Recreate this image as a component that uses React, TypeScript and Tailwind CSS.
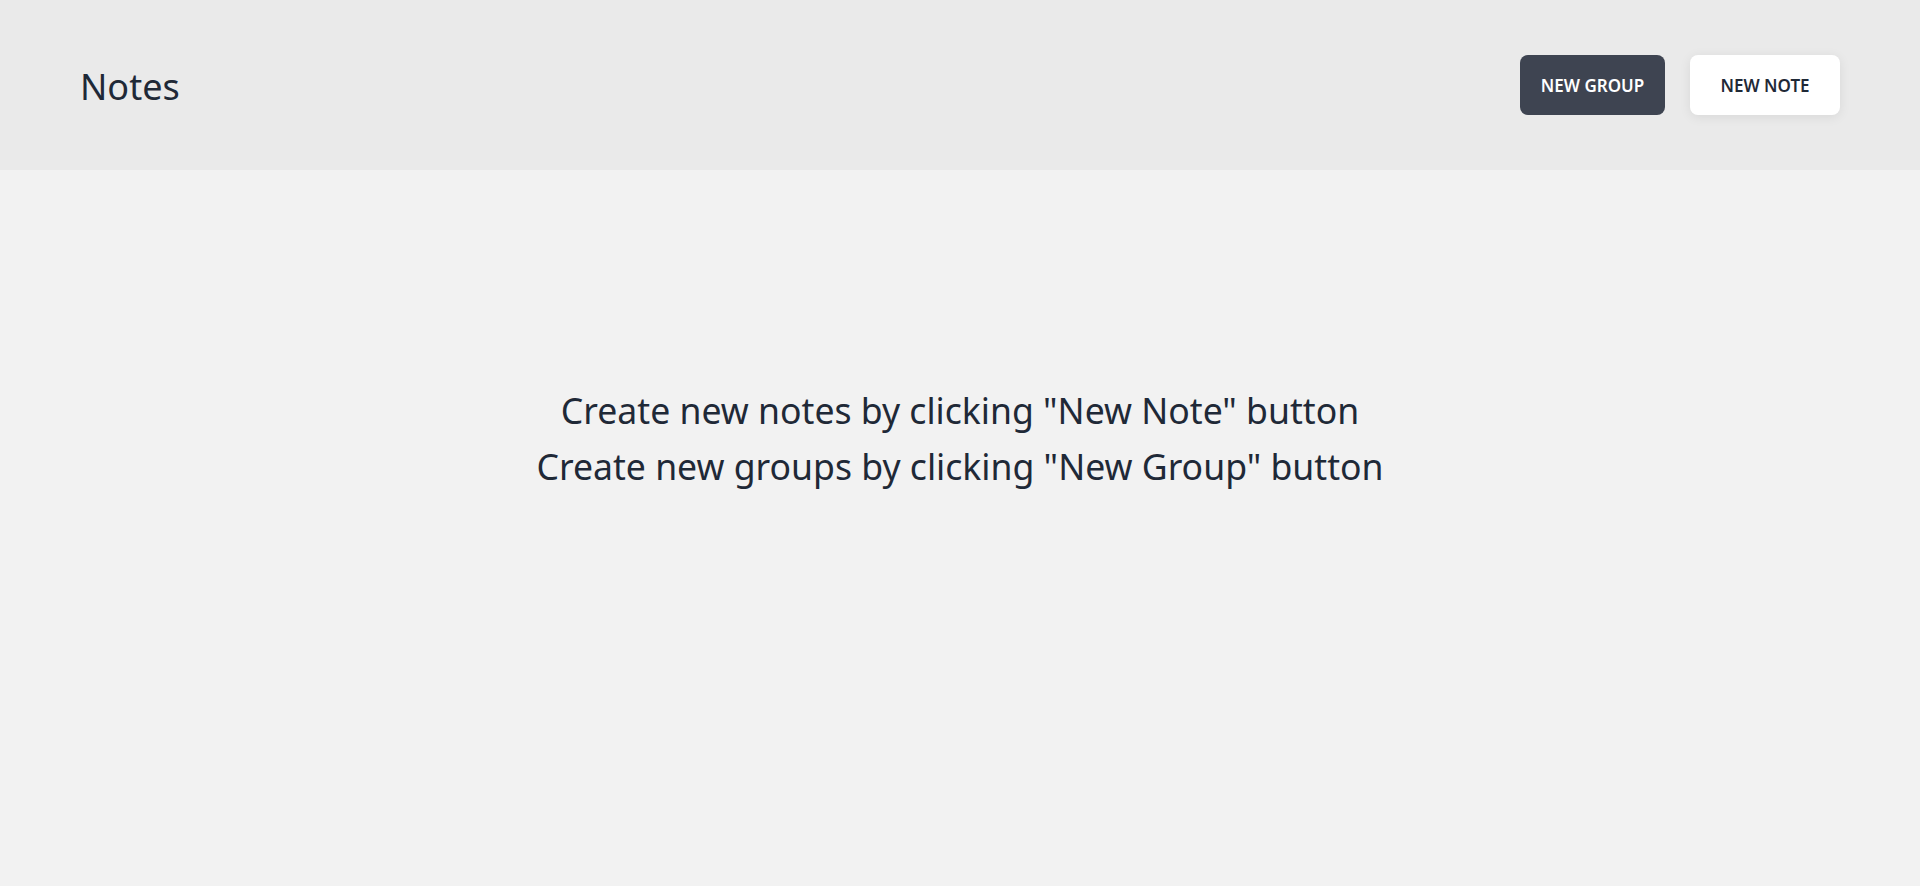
export default function App() {
  return (
    <div className="min-h-screen w-full bg-[#f2f2f2] text-[#1f2937] font-['Noto_Sans',sans-serif]">
      <header className="h-[170px] bg-[#eaeaea] flex items-center justify-between px-[80px]">
        <h1 className="text-[36px] leading-none font-normal pt-[3px]">Notes</h1>
        <div className="flex items-center gap-[25px]">
          <button className="h-[60px] w-[145px] rounded-lg bg-[#3e4451] text-white text-[17px] font-semibold pt-[2px]">
            NEW GROUP
          </button>
          <button className="h-[60px] w-[150px] rounded-lg bg-white text-[#1f2937] text-[17px] font-semibold pt-[2px] shadow-[0_2px_12px_rgba(0,0,0,0.08)]">
            NEW NOTE
          </button>
        </div>
      </header>
      <main className="pt-[212px] flex flex-col items-center text-[35.6px] leading-[56px]">
        <p>Create new notes by clicking "New Note" button</p>
        <p>Create new groups by clicking "New Group" button</p>
      </main>
    </div>
  );
}
